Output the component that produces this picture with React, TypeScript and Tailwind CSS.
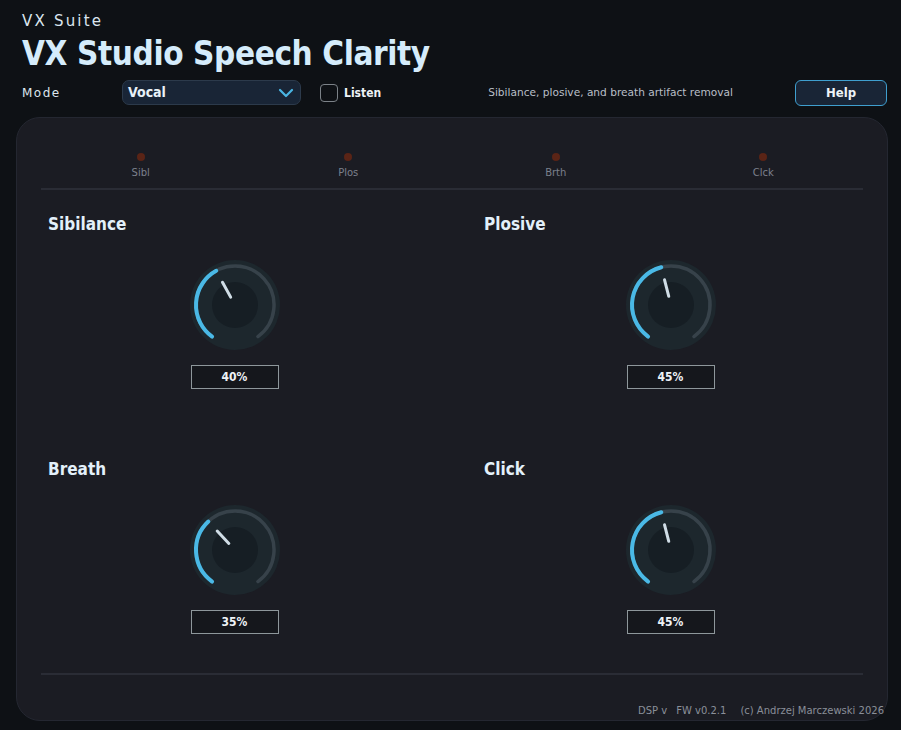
import React from 'react'

const FONT = '"DejaVu Sans", Verdana, sans-serif'
const BOLD = '"DejaVu Sans Condensed", "DejaVu Sans", Verdana, sans-serif'

function polar(cx: number, cy: number, r: number, deg: number) {
  const a = (deg * Math.PI) / 180
  return [cx + r * Math.sin(a), cy - r * Math.cos(a)]
}

function arc(cx: number, cy: number, r: number, from: number, to: number) {
  const [x1, y1] = polar(cx, cy, r, from)
  const [x2, y2] = polar(cx, cy, r, to)
  const large = to - from > 180 ? 1 : 0
  return `M ${x1} ${y1} A ${r} ${r} 0 ${large} 1 ${x2} ${y2}`
}

function Knob({ value }: { value: number }) {
  const start = -144
  const end = 144
  const angle = start + (end - start) * value
  const [px1, py1] = polar(46, 46, 9, angle)
  const [px2, py2] = polar(46, 46, 26, angle)
  return (
    <svg width="92" height="92" viewBox="0 0 92 92">
      <circle cx="46" cy="46" r="45" fill="#1d272d" />
      <path d={arc(46, 46, 39, start, end)} stroke="#37424a" strokeWidth="3.5" fill="none" strokeLinecap="round" />
      <path d={arc(46, 46, 39, start, angle)} stroke="#4ab9e6" strokeWidth="4" fill="none" strokeLinecap="round" />
      <circle cx="46" cy="46" r="23" fill="#161e24" />
      <line x1={px1} y1={py1} x2={px2} y2={py2} stroke="#d0dde6" strokeWidth="3" strokeLinecap="round" />
    </svg>
  )
}

function Control({ title, value }: { title: string; value: number }) {
  return (
    <div className="flex flex-col">
      <div className="h-[30px] text-[17px] font-bold text-[#e3f0fa]" style={{ fontFamily: BOLD }}>
        {title}
      </div>
      <div className="mt-[17px] flex flex-col items-center">
        <Knob value={value} />
        <div
          className="mt-[14px] flex h-[24px] w-[88px] items-center justify-center border border-[#8e979b] bg-[#15171c] text-[12px] font-bold text-[#eef3f7]"
          style={{ fontFamily: BOLD }}
        >
          {Math.round(value * 100)}%
        </div>
      </div>
    </div>
  )
}

const meters = ['Sibl', 'Plos', 'Brth', 'Clck']

export default function App() {
  return (
    <div className="h-[730px] w-[901px] overflow-hidden bg-[#0e1115]" style={{ fontFamily: FONT }}>
      {/* HEADER */}
      <div className="px-[22px] pt-[12px]">
        <div className="text-[15px] leading-[18px] tracking-[2.2px] text-[#dbe6ef]">VX Suite</div>
        <div
          className="mt-[3px] text-[33px] font-bold leading-[42px] tracking-[-0.4px] text-[#d5ecfb]"
          style={{ fontFamily: BOLD }}
        >
          VX Studio Speech Clarity
        </div>
        <div className="mt-[5px] flex h-[25px] items-center">
          <div className="w-[100px] text-[12px] tracking-[1.5px] text-[#dde6ee]">Mode</div>
          <div className="flex h-[25px] w-[179px] items-center justify-between rounded-[7px] border border-[#2c3a4b] bg-[#192536] pl-[5px] pr-[6px]">
            <span className="text-[14px] font-bold text-[#e8f1f8]" style={{ fontFamily: BOLD }}>
              Vocal
            </span>
            <svg width="16" height="10" viewBox="0 0 16 10">
              <path d="M2 2 L8 8 L14 2" stroke="#4ab5e3" strokeWidth="2.2" fill="none" strokeLinecap="round" strokeLinejoin="round" />
            </svg>
          </div>
          <div className="ml-[19px] h-[18px] w-[18px] rounded-[4px] border border-[#7c8288]" />
          <span className="ml-[6px] text-[12px] font-bold text-[#eef3f7]" style={{ fontFamily: BOLD }}>
            Listen
          </span>
          <span className="ml-[107px] text-[10.6px] text-[#b9bfc7]">Sibilance, plosive, and breath artifact removal</span>
          <div
            className="ml-auto mr-[-8px] flex h-[26px] w-[92px] items-center justify-center rounded-[6px] border border-[#3f9fcf] bg-[#192536] text-[13px] font-bold text-[#eef3f7]"
            style={{ fontFamily: BOLD }}
          >
            Help
          </div>
        </div>
      </div>

      {/* PANEL */}
      <div className="ml-[16px] mr-[13px] mt-[12px] h-[604px] rounded-[24px] border border-[#242731] bg-[#1b1c23] px-[24px]">
        <div className="mx-[-4px] grid grid-cols-4 pt-[35px]">
          {meters.map((m) => (
            <div key={m} className="flex flex-col items-center">
              <div className="h-[8px] w-[8px] rounded-full bg-[#5a2416]" />
              <div className="mt-[4px] text-[10px] text-[#7b808d]">{m}</div>
            </div>
          ))}
        </div>
        <div className="mt-[8px] h-[2px] bg-[#2a2c35]" />

        <div className="grid grid-cols-2 gap-x-[63px] gap-y-[68px] pl-[7px] pr-[6px] pt-[22px]">
          <Control title="Sibilance" value={0.4} />
          <Control title="Plosive" value={0.45} />
          <Control title="Breath" value={0.35} />
          <Control title="Click" value={0.45} />
        </div>

        <div className="mt-[39px] h-[2px] bg-[#2a2c35]" />
        <div className="mr-[-21px] mt-[28px] flex justify-end text-[10px] text-[#8a8f99]">
          <span>DSP v</span>
          <span className="ml-[9px]">FW v0.2.1</span>
          <span className="ml-[14px]">(c) Andrzej Marczewski 2026</span>
        </div>
      </div>
    </div>
  )
}
